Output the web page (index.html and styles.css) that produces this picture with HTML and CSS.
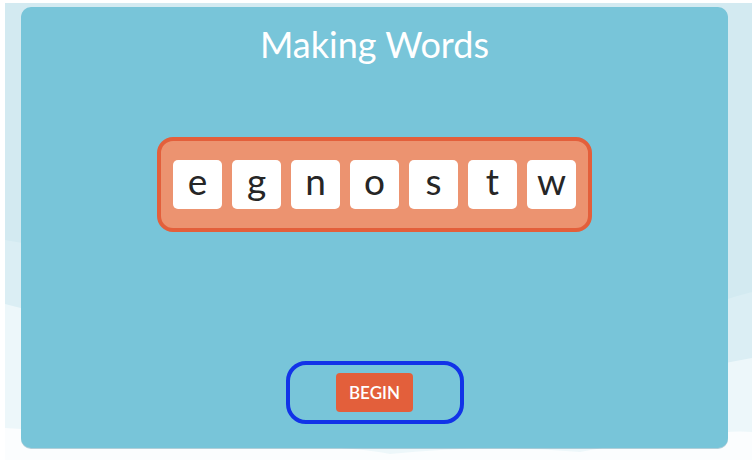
FILE: index.html
```html
<!DOCTYPE html>
<html lang="en">
<head>
    <meta charset="UTF-8">
    <meta name="viewport" content="width=device-width, initial-scale=1.0">
    <title>Making Words</title>
    <link rel="stylesheet" href="styles.css">
</head>
<body>
    <div class="stage">
        <!-- Cloud scenery behind the game board -->
        <svg class="scenery" viewBox="5 3 747 457" preserveAspectRatio="none">
            <rect x="5" y="3" width="747" height="457" fill="#d3eaf1"/>
            <path d="M5 240 L40 246 L120 250 L300 300 L700 310 Q720 300 752 292 L752 460 L5 460 Z" fill="#dbeef4"/>
            <path d="M5 304 L60 318 L300 360 L700 368 Q730 362 752 358 L752 460 L5 460 Z" fill="#edf7fa"/>
            <path d="M5 428 L300 446 Q360 448 390 454 Q480 444 580 452 Q620 444 700 436 Q730 430 752 432 L752 460 L5 460 Z" fill="#fbfdfe"/>
        </svg>

        <main class="board">
            <h1 class="title">Making Words</h1>

            <!-- Letter tray -->
            <div class="tray">
                <div class="tile">e</div>
                <div class="tile">g</div>
                <div class="tile">n</div>
                <div class="tile">o</div>
                <div class="tile">s</div>
                <div class="tile">t</div>
                <div class="tile">w</div>
            </div>

            <div class="spacer"></div>

            <div class="start-box">
                <button class="begin-btn">BEGIN</button>
            </div>
        </main>
    </div>
</body>
</html>
```

FILE: styles.css
```css
body {
    margin: 0;
    padding: 0;
    background-color: #ffffff;
    font-family: Lato, "Open Sans", sans-serif;
}
.stage {
    position: relative;
    margin: 3px 0 0 5px;
    height: 457px;
    padding: 4px 24px 0 16px;
    box-sizing: border-box;
    overflow: hidden;
}
.scenery {
    position: absolute;
    left: 0;
    top: 0;
    width: 100%;
    height: 100%;
}
.board {
    position: relative;
    height: 441px;
    background-color: #78c5d9;
    border-radius: 10px;
    box-shadow: 0 1px 0 rgba(40, 120, 150, 0.35);
    display: flex;
    flex-direction: column;
    align-items: center;
    padding-top: 15px;
    box-sizing: border-box;
}
.title {
    margin: 0;
    color: #ffffff;
    font-size: 36px;
    font-weight: normal;
    line-height: 44px;
}
.tray {
    margin-top: 71px;
    display: flex;
    gap: 10px;
    padding: 19px 12px;
    background-color: #ec9370;
    border: 4px solid #e35f3b;
    border-radius: 16px;
}
.tile {
    width: 49px;
    height: 49px;
    background-color: #ffffff;
    border-radius: 5px;
    display: flex;
    align-items: center;
    justify-content: center;
    color: #262626;
    font-size: 37px;
    line-height: 1;
    padding-bottom: 9px;
    box-sizing: border-box;
}
.spacer {
    flex: 1;
}
.start-box {
    width: 178px;
    height: 63px;
    margin-bottom: 24px;
    border: 4px solid #1233e8;
    border-radius: 20px;
    box-sizing: border-box;
    display: flex;
    align-items: center;
    justify-content: center;
}
.begin-btn {
    height: 39px;
    padding: 0 13px;
    border: none;
    border-radius: 4px;
    background-color: #e35f3b;
    color: #ffffff;
    font-family: Lato, sans-serif;
    font-size: 17px;
    font-weight: 600;
}
```
